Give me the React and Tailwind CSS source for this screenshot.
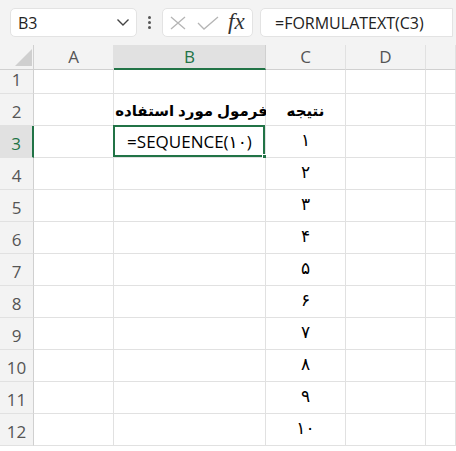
import React from "react";

const FONT = { fontFamily: '"Open Sans", "DejaVu Sans", sans-serif' };
const PERSIAN = ["۱", "۲", "۳", "۴", "۵", "۶", "۷", "۸", "۹", "۱۰"];

function Chevron() {
  return (
    <svg width="14" height="9" viewBox="0 0 14 9" fill="none">
      <path d="M1.5 1.5 L7 7 L12.5 1.5" stroke="#444" strokeWidth="1.4" />
    </svg>
  );
}

function RowHeader({ n, h, selected }) {
  return (
    <div
      className={`flex items-end justify-center border-b border-r ${
        selected ? "bg-[#e1e1e1] text-[#217346] border-r-2 border-r-[#217346]" : "bg-[#f3f3f3] text-[#555] border-r-[#d0d0d0]"
      } border-b-[#e1e1e1] text-[17px] pb-[1px]`}
      style={{ height: h }}
    >
      {n}
    </div>
  );
}

function Cell({ h, children, className = "" }) {
  return (
    <div
      className={`relative flex items-end justify-center border-b border-r border-[#e1e1e1] bg-white ${className}`}
      style={{ height: h }}
    >
      {children}
    </div>
  );
}

export default function App() {
  const rows = [];
  for (let i = 1; i <= 12; i++) {
    const h = i === 1 ? 24 : 32;
    rows.push(
      <React.Fragment key={i}>
        <RowHeader n={i} h={h} selected={i === 3} />
        <Cell h={h} />
        <Cell h={h}>
          {i === 2 && (
            <span dir="rtl" className="font-bold text-[15px] text-black pb-[4px] whitespace-nowrap pl-[4px]">
              فرمول مورد استفاده
            </span>
          )}
          {i === 3 && (
            <>
              <span dir="ltr" className="text-[17px] text-black pb-[3px] whitespace-nowrap">
                =SEQUENCE(۱۰)
              </span>
              <div className="absolute -left-px -top-px -right-0 -bottom-0 border-2 border-[#217346] pointer-events-none" />
              <div className="absolute -right-[3px] -bottom-[3px] w-[6px] h-[6px] bg-[#217346] border border-white" />
            </>
          )}
        </Cell>
        <Cell h={h}>
          {i === 2 && (
            <span dir="rtl" className="font-bold text-[15px] text-black pb-[4px] whitespace-nowrap">
              نتیجه
            </span>
          )}
          {i >= 3 && (
            <span className="text-[17px] text-black pb-[5px]">{PERSIAN[i - 3]}</span>
          )}
        </Cell>
        <Cell h={h} />
        <Cell h={h} />
      </React.Fragment>
    );
  }

  return (
    <div className="w-[456px] h-[451px] overflow-hidden bg-white" style={FONT}>
      {/* Formula bar */}
      <div className="h-[45px] bg-[#f3f3f3] flex items-start pt-[8px] pl-[10px] gap-0">
        <div className="w-[127px] h-[29px] bg-white border border-[#e3e3e3] rounded-[5px] flex items-center justify-between pl-[7px] pr-[6px]">
          <span className="text-[16px] text-[#222]">B3</span>
          <Chevron />
        </div>
        <div className="w-[25px] h-[29px] flex flex-col items-center justify-center gap-[2px]">
          <div className="w-[3px] h-[3px] rounded-full bg-[#555]" />
          <div className="w-[3px] h-[3px] rounded-full bg-[#555]" />
          <div className="w-[3px] h-[3px] rounded-full bg-[#555]" />
        </div>
        <div className="w-[91px] h-[29px] bg-white border border-[#e3e3e3] rounded-[5px] flex items-center pl-[7px]">
          <svg width="16" height="14" viewBox="0 0 16 14" fill="none">
            <path d="M1 1 L15 13 M15 1 L1 13" stroke="#b5b5b5" strokeWidth="1.3" />
          </svg>
          <svg width="22" height="14" viewBox="0 0 22 14" fill="none" className="ml-[11px]">
            <path d="M1 7 L7 13 L21 1" stroke="#b5b5b5" strokeWidth="1.3" />
          </svg>
          <span
            className="ml-[9px] text-[23px] italic text-[#333] leading-none -mt-[3px]"
            style={{ fontFamily: '"Liberation Serif", serif' }}
          >
            fx
          </span>
        </div>
        <div className="ml-[7px] w-[193px] h-[29px] bg-white border border-[#e3e3e3] rounded-l-[5px] flex items-center pl-[14px]">
          <span className="text-[16px] text-[#222]">=FORMULATEXT(C3)</span>
        </div>
      </div>

      {/* Grid */}
      <div className="grid grid-cols-[34px_80px_152px_80px_80px_1fr]">
        {/* header row */}
        <div className="h-[25px] bg-[#f3f3f3] border-b border-r border-[#d0d0d0] relative">
          <svg width="17" height="17" viewBox="0 0 17 17" className="absolute left-[15px] top-[4px]">
            <path d="M17 0 L17 17 L0 17 Z" fill="#cfcfcf" />
          </svg>
        </div>
        {["A", "B", "C", "D", ""].map((c) => (
          <div
            key={c || "E"}
            className={`h-[25px] flex items-center justify-center text-[17px] border-r ${
              c === "B"
                ? "bg-[#e1e1e1] text-[#217346] border-b-2 border-b-[#217346] border-r-[#d0d0d0]"
                : "bg-[#f3f3f3] text-[#555] border-b border-b-[#d0d0d0] border-r-[#e1e1e1]"
            }`}
          >
            {c}
          </div>
        ))}
        {rows}
      </div>
    </div>
  );
}
